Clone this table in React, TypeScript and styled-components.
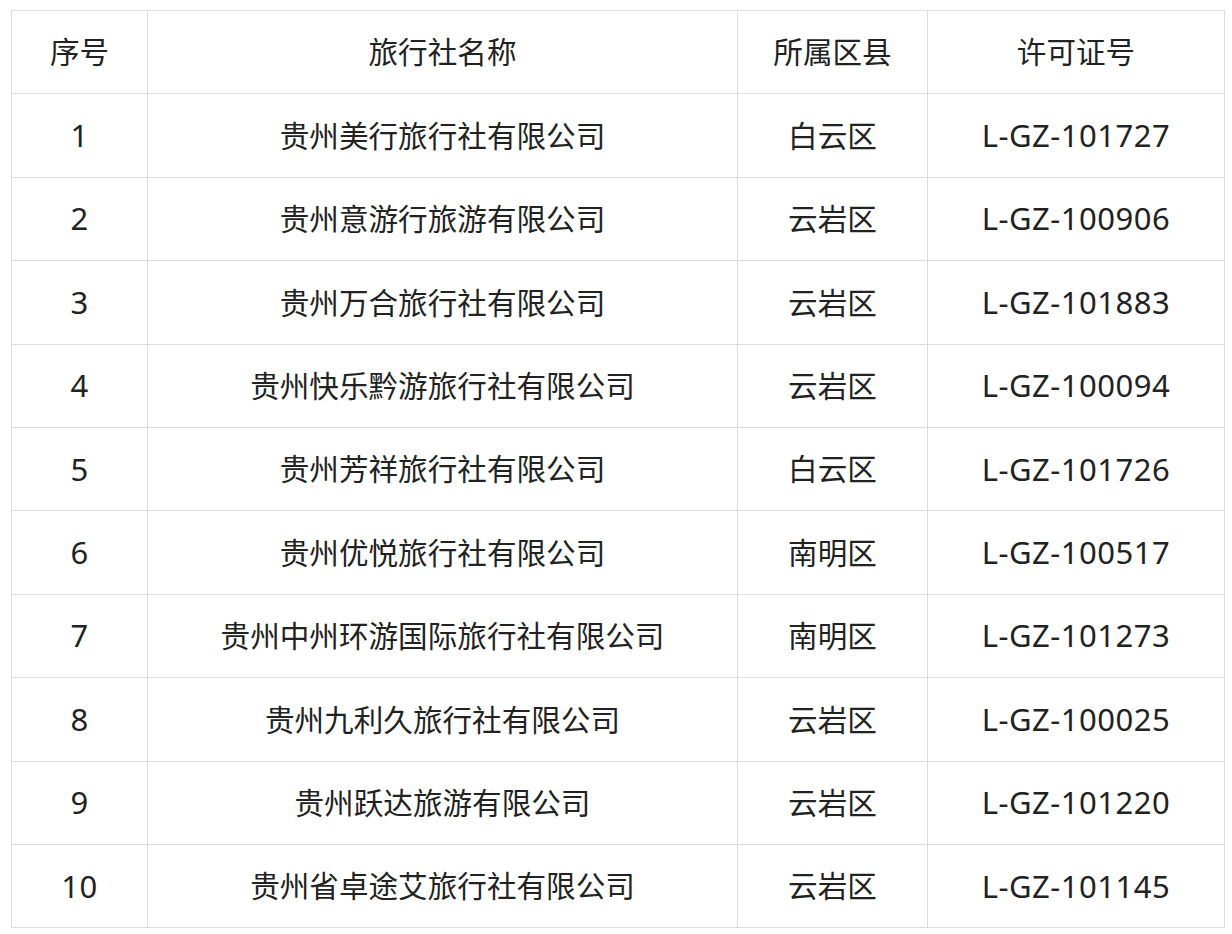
import React from "react";
import styled, { createGlobalStyle } from "styled-components";

const Global = createGlobalStyle`
  html, body { margin: 0; padding: 0; background: #fff; }
  body { font-family: "Noto Sans", "Noto Sans CJK SC", sans-serif; color: #222; }
`;

const Page = styled.div`
  padding: 10px 8px 0 11px;
`;

const Table = styled.table`
  border-collapse: collapse;
  width: 1214px;
  table-layout: fixed;
`;

const Cell = styled.td<{ $w?: number; $latin?: boolean }>`
  border: 1px solid #dcdcdc;
  height: 82.4px;
  padding: 0;
  text-align: center;
  vertical-align: middle;
  font-size: ${(p) => (p.$latin ? "31px" : "29.6px")};
  letter-spacing: ${(p) => (p.$latin ? "0.5px" : "0")};
  line-height: 1.2;
  color: #222;
  ${(p) => (p.$w ? `width: ${p.$w}px;` : "")}
`;

const HeadCell = styled(Cell).attrs({ as: "th" })`
  font-weight: 400;
`;

const rows: [string, string, string, string][] = [
  ["1", "贵州美行旅行社有限公司", "白云区", "L-GZ-101727"],
  ["2", "贵州意游行旅游有限公司", "云岩区", "L-GZ-100906"],
  ["3", "贵州万合旅行社有限公司", "云岩区", "L-GZ-101883"],
  ["4", "贵州快乐黔游旅行社有限公司", "云岩区", "L-GZ-100094"],
  ["5", "贵州芳祥旅行社有限公司", "白云区", "L-GZ-101726"],
  ["6", "贵州优悦旅行社有限公司", "南明区", "L-GZ-100517"],
  ["7", "贵州中州环游国际旅行社有限公司", "南明区", "L-GZ-101273"],
  ["8", "贵州九利久旅行社有限公司", "云岩区", "L-GZ-100025"],
  ["9", "贵州跃达旅游有限公司", "云岩区", "L-GZ-101220"],
  ["10", "贵州省卓途艾旅行社有限公司", "云岩区", "L-GZ-101145"],
];

export default function App() {
  return (
    <Page>
      <Global />
      <Table>
        <thead>
          <tr>
            <HeadCell $w={135}>序号</HeadCell>
            <HeadCell $w={589}>旅行社名称</HeadCell>
            <HeadCell $w={189}>所属区县</HeadCell>
            <HeadCell>许可证号</HeadCell>
          </tr>
        </thead>
        <tbody>
          {rows.map((r) => (
            <tr key={r[0]}>
              {r.map((c, i) => (
                <Cell key={i} $latin={i === 0 || i === 3}>
                  {c}
                </Cell>
              ))}
            </tr>
          ))}
        </tbody>
      </Table>
    </Page>
  );
}
